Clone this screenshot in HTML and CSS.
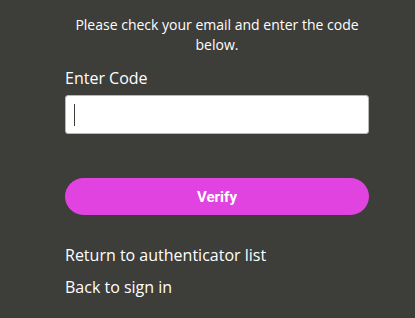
FILE: index.html
```html
<!DOCTYPE html>
<html lang="en">
<head>
<meta charset="utf-8">
<title>Verify code</title>
<link rel="stylesheet" href="styles.css">
</head>
<body>
<main class="panel">
  <p class="intro">Please check your email and enter the code below.</p>
  <form class="form">
    <label class="label" for="code">Enter Code</label>
    <div class="field"><span class="caret"></span></div>
    <button class="verify" type="button">Verify</button>
  </form>
  <nav class="links">
    <a class="link" href="#">Return to authenticator list</a>
    <a class="link" href="#">Back to sign in</a>
  </nav>
</main>
</body>
</html>
```

FILE: styles.css
```css
html, body {
  margin: 0;
  padding: 0;
  background: #3d3d39;
}
body {
  width: 415px;
  height: 318px;
  overflow: hidden;
  font-family: "Open Sans", "Noto Sans", sans-serif;
  color: #ffffff;
}
.panel {
  padding: 15px 46px 0 65px;
  display: flex;
  flex-direction: column;
}
.intro {
  margin: 0;
  font-size: 14px;
  line-height: 20px;
  text-align: center;
}
.form {
  display: flex;
  flex-direction: column;
  margin-top: 11px;
}
.label {
  font-size: 16px;
  line-height: 24px;
}
.field {
  margin-top: 5px;
  height: 39px;
  box-sizing: border-box;
  background: #ffffff;
  border: 1px solid #b8b8b4;
  border-radius: 3px;
  display: flex;
  align-items: center;
  padding-left: 8px;
}
.caret {
  width: 1px;
  height: 22px;
  background: #3d3d39;
}
.verify {
  margin-top: 44px;
  height: 37px;
  border: none;
  border-radius: 19px;
  background: #e043e0;
  color: #ffffff;
  font-family: Roboto, "Liberation Sans", sans-serif;
  font-weight: 700;
  font-size: 15px;
  padding: 0;
}
.links {
  margin-top: 28px;
  display: flex;
  flex-direction: column;
  gap: 8px;
}
.link {
  color: #ffffff;
  text-decoration: none;
  font-size: 16px;
  line-height: 24px;
}
```
